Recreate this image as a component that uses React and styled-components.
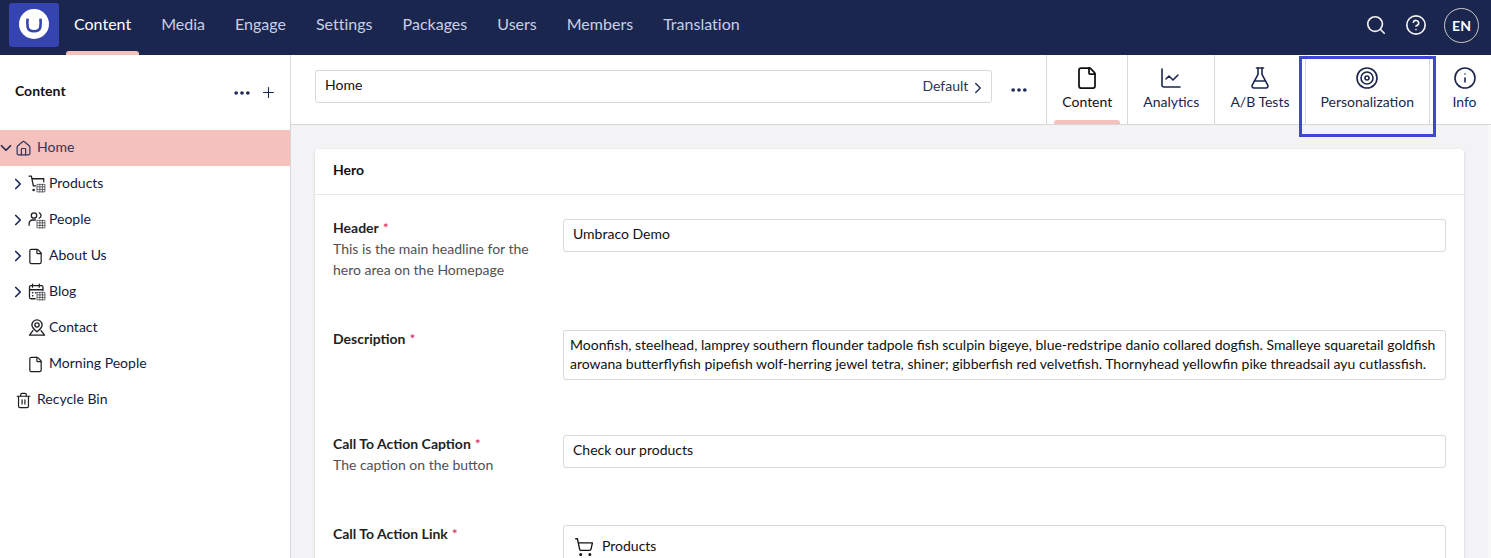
import React from "react";
import styled, { createGlobalStyle } from "styled-components";
import {
  Search, CircleHelp, Ellipsis, Plus, ChevronRight, ChevronDown, House, File, Trash2,
  ChartLine, FlaskConical, Target, Info, ShoppingCart,
} from "lucide-react";

const Global = createGlobalStyle`
  html, body { margin: 0; padding: 0; height: 100%; overflow: hidden; background: #fff; }
  body { font-family: Lato, "Open Sans", sans-serif; font-size: 14px; color: #1b264f; }
  #root { height: 100%; }
  * { box-sizing: border-box; }
  svg { flex: none; }
`;

const Page = styled.div`
  height: 100vh; display: flex; flex-direction: column; overflow: hidden; position: relative;
`;
const Header = styled.header`
  height: 55px; flex: none; background: #1b264f; display: flex; align-items: stretch; padding-left: 9px;
`;
const LogoBox = styled.div`
  width: 50px; height: 44px; margin-top: 3px; padding-bottom: 3px; background: #3544b1; border-radius: 3px;
  display: flex; align-items: center; justify-content: center;
`;
const Nav = styled.nav`display: flex; flex: 1;`;
const NavItem = styled.div`
  position: relative; padding: 0 15px 4px; display: flex; align-items: center; height: 50px;
  font-size: 16px; letter-spacing: 0.01px; color: ${p => (p.$active ? "#fff" : "#c8cfe6")};
  ${p => p.$active && `&::after { content: ""; position: absolute; left: 7px; right: 7px; top: 51px; height: 4px;
    background: #f5c1bc; border-radius: 3px 3px 0 0; }`}
`;
const HeaderTools = styled.div`
  display: flex; align-items: center; height: 50px; color: #fff; padding-right: 12px;
`;
const ToolIcon = styled.span`
  width: 40px; display: flex; justify-content: center; align-items: center; color: #f3f3f5;
`;
const Lang = styled.div`
  width: 35px; height: 35px; margin-left: 8px; border-radius: 50%; border: 1.5px solid #c9c9c9;
  color: #fff; font-weight: 700; font-size: 14px; display: flex; align-items: center; justify-content: center;
`;
const Body = styled.div`flex: 1; display: flex; min-height: 0;`;
const Sidebar = styled.aside`
  width: 291px; flex: none; border-right: 1px solid #d8d7d9; background: #fff;
`;
const SideHead = styled.div`
  height: 72px; padding: 0 13px 0 15px; display: flex; align-items: center; justify-content: space-between;
  font-weight: 700; color: #111;
`;
const SideTitle = styled.span`padding-bottom: 2px;`;
const SideTools = styled.div`display: flex; align-items: center; gap: 8px; color: #1b264f; margin-top: 3px;`;
const Tree = styled.div`padding-top: 3px;`;
const TreeRow = styled.div`
  height: 36px; display: flex; align-items: center; position: relative;
  padding-left: ${p => (p.$level ? 28 : 16)}px;
  background: ${p => (p.$active ? "#f5c1bc" : "transparent")};
  color: ${p => (p.$active ? "#2f3560" : "#111c44")};
`;
const TreeLabel = styled.span`padding-bottom: 4px;`;
const Caret = styled.span`
  position: absolute; left: ${p => (p.$level ? 12 : 0)}px; top: 10px; width: 12px; height: 15px;
  display: flex; align-items: center; justify-content: center; color: #1b264f;
`;
const TreeIcon = styled.span`
  width: 21px; height: 18px; display: flex; align-items: center; color: #1f1f24; flex: none;
  margin-left: ${p => p.$nudge || 0}px;
  margin-right: ${p => -(p.$nudge || 0)}px;
`;
const Main = styled.main`flex: 1; min-width: 0; background: #f3f3f5; display: flex; flex-direction: column;`;
const TopBar = styled.div`
  height: 70px; flex: none; background: #fff; border-bottom: 1px solid #d8d7d9; display: flex; align-items: stretch;
  padding-left: 24px; overflow: hidden;
`;
const NameField = styled.div`
  flex: 1; height: 33px; margin-top: 15px; border: 1px solid #d8d7d9; border-radius: 3px; display: flex;
  align-items: center; justify-content: space-between; padding: 0 4px 0 9px; color: #111;
`;
const NameText = styled.span`margin-top: -5px;`;
const Variant = styled.span`display: flex; align-items: center; gap: 1px; color: #2b3358;`;
const VariantText = styled.span`padding-bottom: 2px;`;
const VariantChevron = styled(ChevronRight)`margin-top: 2px;`;
const Dots = styled.span`
  width: 54px; display: flex; align-items: center; justify-content: center; color: #1b264f;
`;
const Tabs = styled.div`display: flex; margin-right: -8px;`;
const Tab = styled.div`
  position: relative; min-width: 70px; padding: 11px 15px 0; border-left: 1px solid #d8d7d9; display: flex;
  flex-direction: column; align-items: center; gap: 3px; color: ${p => (p.$active ? "#111" : "#1b264f")};
  ${p => p.$active && `&::after { content: ""; position: absolute; left: 7px; right: 7px; bottom: 0; height: 4px;
    background: #f5c1bc; border-radius: 3px 3px 0 0; }`}
`;
const TabIcon = styled.span`height: 24px; display: flex; align-items: center; justify-content: center;`;
const Scroll = styled.div`
  flex: 1; min-height: 0; padding: 24px 24px 0 24px; overflow: hidden; border-right: 3px solid #f8f8f9;
`;
const Card = styled.section`
  background: #fff; border-radius: 4px; box-shadow: 0 1px 3px rgba(0, 0, 0, 0.16);
`;
const CardHead = styled.div`
  height: 46px; display: flex; align-items: center; padding: 0 18px 4px; font-weight: 700; color: #111;
  border-bottom: 1px solid #e9e9eb;
`;
const CardBody = styled.div`padding: 24px 18px 0; display: flex; flex-direction: column; gap: 48px;`;
const Row = styled.div`display: grid; grid-template-columns: 230px 1fr; min-height: ${p => p.$min || 0}px;`;
const Label = styled.div`font-weight: 700; line-height: 21px; color: #1f1f24; margin-top: -2px; margin-bottom: 2px;`;
const Required = styled.span`color: #d42054; font-weight: 400; margin-left: 4px;`;
const Desc = styled.div`font-weight: 400; color: #515054; line-height: 21px; max-width: 210px;`;
const Input = styled.div`
  height: 33px; border: 1px solid #d8d7d9; border-radius: 3px; padding: 0 9px 4px; display: flex; align-items: center;
  color: #111;
`;
const Area = styled.div`
  height: 50px; border: 1px solid #d8d7d9; border-radius: 3px; padding: 4px 6px; line-height: 19px; color: #111;
  overflow: hidden;
`;
const Picker = styled.div`
  height: 60px; border: 1px solid #d8d7d9; border-radius: 3px; padding: 11px 10px; display: flex; align-items: flex-start;
  gap: 8px; color: #111; line-height: 17px;
`;
const Annotation = styled.div`
  position: absolute; left: 1299px; top: 56px; width: 137px; height: 81px; border: 3px solid #3f48cc; pointer-events: none;
`;

const Logo = () => (
  <svg width="30" height="30" viewBox="0 0 30 30">
    <circle cx="15" cy="15" r="15" fill="#fff" />
    <path d="M8.6 9.6c-.4 3-.4 6 .1 8.6.5 2.6 2.5 4 6.3 4s5.8-1.4 6.3-4c.5-2.6.5-5.6.1-8.6" fill="none" stroke="#3544b1" strokeWidth="2.6" />
  </svg>
);
const Grid = () => (
  <g stroke="#2a2a30" strokeWidth="0.9" fill="none">
    <rect x="12.5" y="12.5" width="10" height="10" />
    <path d="M12.5 15.8h10M12.5 19.2h10M15.8 12.5v10M19.2 12.5v10" />
  </g>
);
const GridIcon = ({ children }) => (
  <svg width="18" height="18" viewBox="0 0 24 24" fill="none" stroke="#1f1f24" strokeWidth="1.7" strokeLinecap="round" strokeLinejoin="round">
    {children}
    <Grid />
  </svg>
);
const CartGrid = () => (
  <GridIcon>
    <path d="M1.5 1.5h3l2.6 13h3M5 5h16v4" />
    <circle cx="7.5" cy="20" r="0.9" />
  </GridIcon>
);
const PeopleGrid = () => (
  <GridIcon>
    <circle cx="8" cy="6" r="3.6" />
    <path d="M1.5 19v-2.5A4.5 4.5 0 0 1 6 12h4M15 2.6a3.6 3.6 0 0 1 0 6.8" />
  </GridIcon>
);
const CalendarGrid = () => (
  <GridIcon>
    <path d="M6 1.5v4M15 1.5v4M2 9h18M9.5 21H4a2 2 0 0 1-2-2V5.5a2 2 0 0 1 2-2h14a2 2 0 0 1 2 2V10M6 13h.5M6 17h.5M10 13h.5" />
  </GridIcon>
);
const Contact = () => (
  <svg width="18" height="18" viewBox="0 0 24 24" fill="none" stroke="#1f1f24" strokeWidth="1.8" strokeLinecap="round" strokeLinejoin="round">
    <path d="M12 17c-3.4-2.8-6.8-5.2-6.8-9a6.8 6.8 0 0 1 13.6 0c0 3.8-3.4 6.2-6.8 9z" />
    <circle cx="12" cy="8" r="2.8" />
    <path d="M6.5 15.5l-4.5 6h20l-4.5-6" />
  </svg>
);

const navItems = ["Content", "Media", "Engage", "Settings", "Packages", "Users", "Members", "Translation"];
const tree = [
  { label: "Products", icon: <CartGrid />, caret: true },
  { label: "People", icon: <PeopleGrid />, caret: true },
  { label: "About Us", icon: <File size={17} strokeWidth={1.7} />, caret: true, nudge: -1 },
  { label: "Blog", icon: <CalendarGrid />, caret: true },
  { label: "Contact", icon: <Contact /> },
  { label: "Morning People", icon: <File size={17} strokeWidth={1.7} />, nudge: -1 },
];
const tabs = [
  { label: "Content", icon: <File size={24} strokeWidth={1.75} />, active: true },
  { label: "Analytics", icon: <ChartLine size={24} strokeWidth={1.6} /> },
  { label: "A/B Tests", icon: <FlaskConical size={24} strokeWidth={1.6} /> },
  { label: "Personalization", icon: <Target size={24} strokeWidth={1.6} /> },
  { label: "Info", icon: <Info size={24} strokeWidth={1.6} /> },
];

export default function App() {
  return (
    <Page>
      <Global />
      <Header>
        <LogoBox><Logo /></LogoBox>
        <Nav>
          {navItems.map((n, i) => <NavItem key={n} $active={i === 0}>{n}</NavItem>)}
        </Nav>
        <HeaderTools>
          <ToolIcon><Search size={22} strokeWidth={1.8} /></ToolIcon>
          <ToolIcon><CircleHelp size={22} strokeWidth={1.8} /></ToolIcon>
          <Lang>EN</Lang>
        </HeaderTools>
      </Header>
      <Body>
        <Sidebar>
          <SideHead>
            <SideTitle>Content</SideTitle>
            <SideTools>
              <Ellipsis size={20} strokeWidth={2.4} />
              <Plus size={17} strokeWidth={1.5} />
            </SideTools>
          </SideHead>
          <Tree>
            <TreeRow $active>
              <Caret><ChevronDown size={18} strokeWidth={2.2} /></Caret>
              <TreeIcon $nudge={-1}><House size={17} strokeWidth={1.7} color="#2f3560" /></TreeIcon>
              <TreeLabel>Home</TreeLabel>
            </TreeRow>
            {tree.map(t => (
              <TreeRow key={t.label} $level={1}>
                {t.caret && <Caret $level={1}><ChevronRight size={18} strokeWidth={2.2} /></Caret>}
                <TreeIcon $nudge={t.nudge}>{t.icon}</TreeIcon>
                <TreeLabel>{t.label}</TreeLabel>
              </TreeRow>
            ))}
            <TreeRow>
              <TreeIcon $nudge={-1}><Trash2 size={17} strokeWidth={1.7} /></TreeIcon>
              <TreeLabel>Recycle Bin</TreeLabel>
            </TreeRow>
          </Tree>
        </Sidebar>
        <Main>
          <TopBar>
            <NameField>
              <NameText>Home</NameText>
              <Variant><VariantText>Default</VariantText><VariantChevron size={18} strokeWidth={2} /></Variant>
            </NameField>
            <Dots><Ellipsis size={20} strokeWidth={2.4} /></Dots>
            <Tabs>
              {tabs.map(t => (
                <Tab key={t.label} $active={t.active}>
                  <TabIcon>{t.icon}</TabIcon>
                  {t.label}
                </Tab>
              ))}
            </Tabs>
          </TopBar>
          <Scroll>
            <Card>
              <CardHead>Hero</CardHead>
              <CardBody>
                <Row>
                  <Label>Header<Required>*</Required>
                    <Desc>This is the main headline for the hero area on the Homepage</Desc>
                  </Label>
                  <Input>Umbraco Demo</Input>
                </Row>
                <Row $min={57}>
                  <Label>Description<Required>*</Required></Label>
                  <Area>Moonfish, steelhead, lamprey southern flounder tadpole fish sculpin bigeye, blue-redstripe danio collared dogfish. Smalleye squaretail goldfish arowana butterflyfish pipefish wolf-herring jewel tetra, shiner; gibberfish red velvetfish. Thornyhead yellowfin pike threadsail ayu cutlassfish.</Area>
                </Row>
                <Row>
                  <Label>Call To Action Caption<Required>*</Required>
                    <Desc>The caption on the button</Desc>
                  </Label>
                  <Input>Check our products</Input>
                </Row>
                <Row>
                  <Label>Call To Action Link<Required>*</Required></Label>
                  <Picker><ShoppingCart size={20} strokeWidth={1.6} />Products</Picker>
                </Row>
              </CardBody>
            </Card>
          </Scroll>
        </Main>
      </Body>
      <Annotation />
    </Page>
  );
}
